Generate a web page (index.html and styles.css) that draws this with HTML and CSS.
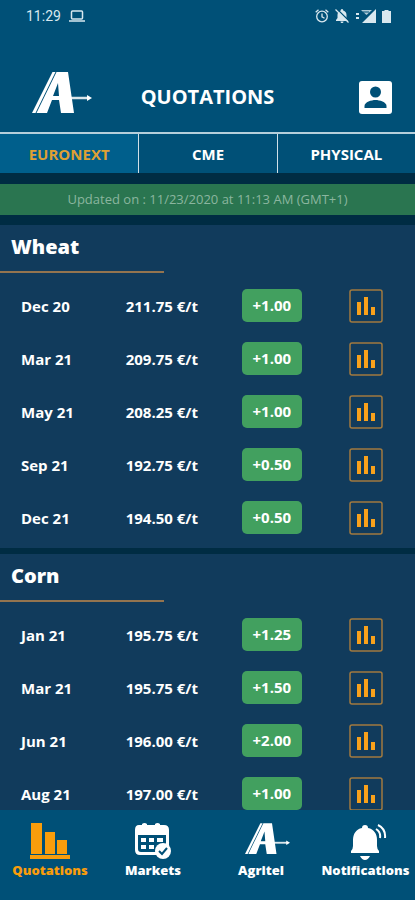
FILE: index.html
```html
<!DOCTYPE html>
<html lang="en">
<head>
<meta charset="utf-8">
<meta name="viewport" content="width=device-width, initial-scale=1">
<title>Quotations</title>
<link rel="stylesheet" href="styles.css">
</head>
<body>
<svg class="sprite" aria-hidden="true">
  <symbol id="logo" viewBox="0 0 60 42">
    <path fill="currentColor" fill-rule="evenodd" d="M24.500 0H36l6 41H29l-2-13h-7l-5 13H4.500zM26 11l-5 13h6z"/>
    <path fill="currentColor" d="M20.500 0h3L3.500 41H0z"/>
    <path stroke="currentColor" stroke-width="2.500" opacity=".85" d="M19 26h37"/>
    <path fill="currentColor" d="M55 23l5 3-5 3z"/>
  </symbol>
  <symbol id="chart" viewBox="0 0 34 34">
    <rect x="1" y="1" width="32" height="32" rx="2" fill="none" stroke="#a17a3f" stroke-width="1.5"/>
    <path fill="#f9a11b" d="M8 13h4v13H8zM15 8h4v18h-4zM22 18h4v8h-4z"/>
  </symbol>
</svg>
<div class="app">
  <div class="status">
    <span class="clock">11:29</span>
    <svg class="laptop" width="16" height="12" viewBox="0 0 16 12" fill="none" stroke="currentColor" stroke-width="1.5"><rect x="2.5" y="1" width="11" height="8" rx="1"/><path d="M0 11h16"/></svg>
    <span class="indicators">
      <svg width="14" height="14" viewBox="0 0 14 14" fill="none" stroke="currentColor" stroke-width="1.3"><circle cx="7" cy="7.5" r="5.3"/><path d="M7 4.5v3.300l2.500 1.500M.7 3.200L3.500.8M13.300 3.200L10.500.8"/></svg>
      <svg width="14" height="14" viewBox="0 0 14 14"><path fill="currentColor" d="M7 0c1 0 1.200.8 1.200 1.500C10.500 2 11.500 4 11.500 6v3l1.500 2v1H1v-1l1.500-2V6c0-2 1-4 3.300-4.500C5.800.8 6 0 7 0zM5.500 12.500h3c0 2-3 2-3 0z"/><path stroke="#005077" stroke-width="1.300" d="M2 0l12 12"/><path stroke="currentColor" stroke-width="1.200" d="M.5.5l13 13"/></svg>
      <svg class="signal" width="21" height="14" viewBox="0 0 21 14"><path fill="currentColor" d="M1 4h3v2H1zM1 8h3v2H1zM21 0v14H7z"/><path fill="currentColor" opacity=".8" d="M6 1h11l-5.500 5z"/><path stroke="#005077" d="M8 3h6"/></svg>
      <svg width="9" height="13" viewBox="0 0 9 13"><path fill="currentColor" d="M2.500 0h4v1H9v12H0V1h2.500z"/></svg>
    </span>
  </div>
  <header class="header">
    <svg class="brand" role="img" aria-label="Agritel"><use href="#logo"/></svg>
    <h1>QUOTATIONS</h1>
    <button class="account" type="button" aria-label="Account">
      <svg width="33" height="33" viewBox="0 0 33 33"><rect width="33" height="33" rx="3" fill="#fff"/><circle cx="16.500" cy="11" r="5.500" fill="#005077"/><path fill="#005077" d="M5.500 27v-2c0-4 7-6 11-6s11 2 11 6v2z"/></svg>
    </button>
  </header>
  <nav class="tabs" aria-label="Exchange">
    <button class="tab active" type="button">EURONEXT</button>
    <button class="tab" type="button">CME</button>
    <button class="tab" type="button">PHYSICAL</button>
  </nav>
  <main class="content">
    <p class="updated">Updated on : 11/23/2020 at 11:13 AM (GMT+1)</p>
    <section class="group">
      <h2>Wheat</h2>
      <table class="quotes">
        <tr><th scope="row">Dec 20</th><td>211.75 €/t</td><td><span class="change">+1.00</span></td><td><button class="chart" type="button" aria-label="Wheat Dec 20 chart"><svg><use href="#chart"/></svg></button></td></tr>
        <tr><th scope="row">Mar 21</th><td>209.75 €/t</td><td><span class="change">+1.00</span></td><td><button class="chart" type="button" aria-label="Wheat Mar 21 chart"><svg><use href="#chart"/></svg></button></td></tr>
        <tr><th scope="row">May 21</th><td>208.25 €/t</td><td><span class="change">+1.00</span></td><td><button class="chart" type="button" aria-label="Wheat May 21 chart"><svg><use href="#chart"/></svg></button></td></tr>
        <tr><th scope="row">Sep 21</th><td>192.75 €/t</td><td><span class="change">+0.50</span></td><td><button class="chart" type="button" aria-label="Wheat Sep 21 chart"><svg><use href="#chart"/></svg></button></td></tr>
        <tr><th scope="row">Dec 21</th><td>194.50 €/t</td><td><span class="change">+0.50</span></td><td><button class="chart" type="button" aria-label="Wheat Dec 21 chart"><svg><use href="#chart"/></svg></button></td></tr>
      </table>
    </section>
    <section class="group">
      <h2>Corn</h2>
      <table class="quotes">
        <tr><th scope="row">Jan 21</th><td>195.75 €/t</td><td><span class="change">+1.25</span></td><td><button class="chart" type="button" aria-label="Corn Jan 21 chart"><svg><use href="#chart"/></svg></button></td></tr>
        <tr><th scope="row">Mar 21</th><td>195.75 €/t</td><td><span class="change">+1.50</span></td><td><button class="chart" type="button" aria-label="Corn Mar 21 chart"><svg><use href="#chart"/></svg></button></td></tr>
        <tr><th scope="row">Jun 21</th><td>196.00 €/t</td><td><span class="change">+2.00</span></td><td><button class="chart" type="button" aria-label="Corn Jun 21 chart"><svg><use href="#chart"/></svg></button></td></tr>
        <tr><th scope="row">Aug 21</th><td>197.00 €/t</td><td><span class="change">+1.00</span></td><td><button class="chart" type="button" aria-label="Corn Aug 21 chart"><svg><use href="#chart"/></svg></button></td></tr>
      </table>
    </section>
  </main>
  <nav class="bottom" aria-label="Main">
    <a class="active" href="#quotations">
      <svg width="40" height="38" viewBox="0 0 40 38"><path fill="currentColor" d="M1 0h11v31H1zM15 9h10v22H15zM27 17h10v14H27zM0 32h40v4H0z"/></svg>
      Quotations</a>
    <a href="#markets">
      <svg width="38" height="38" viewBox="0 0 38 38"><path fill="currentColor" fill-rule="evenodd" d="M5 2h3V1q2.500-2 5 0v1h8V1q2.500-2 5 0v1h4q5 0 5 5v20q0 5-5 5H6q-5 0-5-5V7q0-5 4-5zM4 12v14q0 3 3 3h22q3 0 3-3V12z"/><path fill="currentColor" d="M7 15h5v4H7zM15 15h5v4h-5zM23 15h6v4h-6zM7 22h5v4H7zM15 22h5v4h-5z"/><circle cx="29" cy="28" r="8" fill="currentColor"/><path fill="none" stroke="#005077" stroke-width="2" d="M25 28l3 3 5-6"/></svg>
      Markets</a>
    <a href="#agritel">
      <svg width="57" height="38" viewBox="0 0 57 38"><use href="#logo" x="12" y="0" width="45" height="32"/></svg>
      Agritel</a>
    <a href="#notifications">
      <svg width="42" height="38" viewBox="-6 0 42 38"><path fill="currentColor" d="M14 2c2 0 3 1 3 3 6 1 9 6 9 12v6q0 3 2 5v2H0v-2q2-2 2-5v-6C2 11 5 6 11 5c0-2 1-3 3-3zM9 33h10q-2 4-5 4t-5-4z"/><path fill="none" stroke="currentColor" stroke-width="2" d="M25 6q5 3 4 9M27 2q8 4 7 13"/></svg>
      Notifications</a>
  </nav>
</div>
</body>
</html>
```
FILE: styles.css
```css
* { box-sizing: border-box; }
body { margin: 0; background: #002c43; color: #fff; font-family: "Open Sans", "Noto Sans", sans-serif; }
button { margin: 0; padding: 0; border: 0; background: none; color: inherit; font: inherit; cursor: pointer; }
.sprite { display: none; }
.app { display: flex; flex-direction: column; height: 100vh; }
svg { display: block; flex: none; }

.status { display: flex; align-items: center; gap: 8px; height: 32px; padding: 0 24px 0 26px; background: #005077; color: #d9e8ef; font: 14px/32px Roboto, sans-serif; flex: none; }
.indicators { display: flex; align-items: center; gap: 6px; margin-left: auto; }

.header { display: grid; grid-template-columns: 1fr auto 1fr; align-items: center; flex: none; height: 102px; padding: 30px 32px 0; background: #005077; border-bottom: 2px solid #b5cfdb; }
.brand { width: 60px; height: 42px; margin-bottom: 8px; }
.header h1 { margin: 0; font-size: 20px; line-height: 28px; font-weight: 700; }
.account { justify-self: end; margin-right: -9px; }

.tabs { display: grid; grid-template-columns: repeat(3, 1fr); flex: none; height: 39px; background: #005077; }
.tab { font-size: 15px; font-weight: 700; border-left: 1px solid #d0e0e8; }
.tab:first-child { border-left: 0; }
.tab.active { background: #005f8c; color: #dfa034; }

.content { flex: 1; min-height: 0; overflow: hidden; padding-top: 11px; }
.updated { margin: 0 0 10px; background: #2a7550; color: #8bb59f; font-size: 13px; line-height: 31px; text-align: center; }
.group { margin-bottom: 6px; padding-bottom: 4px; background: #113b5c; }
.group h2 { width: 164px; margin: 0 0 6px; padding: 0 0 2px 11px; border-bottom: 2px solid #94744f; font-size: 20px; font-weight: 800; line-height: 44px; }
.quotes { width: 100%; border-collapse: collapse; table-layout: fixed; font-size: 15px; font-weight: 700; }
.quotes th, .quotes td { height: 53px; padding: 0; text-align: center; }
.quotes th { width: 25%; padding-left: 21px; text-align: left; }
.quotes td:nth-child(2) { width: 28%; }
.quotes td:nth-child(3) { width: 25%; }
.quotes td:nth-child(4) { padding-right: 6px; }
.change { display: inline-block; width: 60px; border-radius: 5px; background: #42a05f; line-height: 33px; vertical-align: middle; }
.chart { display: inline-block; vertical-align: middle; }
.chart svg { width: 34px; height: 34px; }

.bottom { display: grid; grid-template-columns: 100fr 106fr 110fr 99fr; flex: none; height: 90px; padding-top: 13px; background: #005077; }
.bottom a { display: flex; flex-direction: column; align-items: center; min-width: 0; color: #fff; font-size: 13px; font-weight: 800; line-height: 18px; text-decoration: none; white-space: nowrap; }
.bottom a.active { color: #f99d0b; }
```
